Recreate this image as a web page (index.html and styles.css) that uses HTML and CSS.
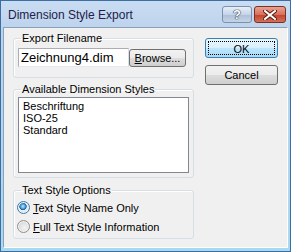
FILE: index.html
```html
<!DOCTYPE html>
<html lang="en">
<head>
    <meta charset="UTF-8">
    <title>Dimension Style Export</title>
    <link rel="stylesheet" href="styles.css">
</head>
<body>
    <div class="window">
        <div class="titlebar">
            <span class="title">Dimension Style Export</span>
            <div class="caption-buttons">
                <span class="cbtn help">?</span>
                <span class="cbtn close">
                    <svg width="14" height="10" viewBox="0 0 14 10">
                        <path d="M2 1 L12 9 M12 1 L2 9" stroke="#5a1a10" stroke-width="4" stroke-linecap="square"/>
                        <path d="M2 1 L12 9 M12 1 L2 9" stroke="#fff" stroke-width="2" stroke-linecap="square"/>
                    </svg>
                </span>
            </div>
        </div>

        <div class="client">
            <div class="left-col">
                <fieldset class="group group-file">
                    <legend>Export Filename</legend>
                    <div class="file-row">
                        <input class="filename" type="text" value="Zeichnung4.dim" aria-label="Export filename">
                        <button class="btn browse"><u>B</u>rowse...</button>
                    </div>
                </fieldset>

                <fieldset class="group group-styles">
                    <legend>Available Dimension Styles</legend>
                    <ul class="listbox">
                        <li>Beschriftung</li>
                        <li>ISO-25</li>
                        <li>Standard</li>
                    </ul>
                </fieldset>

                <fieldset class="group group-text">
                    <legend>Text Style Options</legend>
                    <label class="option">
                        <span class="radio checked"></span>
                        <span><u>T</u>ext Style Name Only</span>
                    </label>
                    <label class="option">
                        <span class="radio"></span>
                        <span><u>F</u>ull Text Style Information</span>
                    </label>
                </fieldset>
            </div>

            <div class="right-col">
                <button class="btn default"><span class="focus">OK</span></button>
                <button class="btn">Cancel</button>
            </div>
        </div>
    </div>
</body>
</html>
```

FILE: styles.css
```css
body {
    margin: 0;
    font-family: "Liberation Sans", Arial, sans-serif;
    font-size: 11px;
    color: #000;
    background: #fff;
}

.window {
    width: 291px;
    height: 252px;
    box-sizing: border-box;
    border: 1px solid #3a6ea5;
    background: linear-gradient(#c9dcf2, #bcd3ec 30px, #a9d9f0);
    display: flex;
    flex-direction: column;
    padding: 0 2px 3px 2px;
}

.titlebar {
    height: 26px;
    display: flex;
    align-items: center;
    justify-content: space-between;
}

.title {
    font-size: 12px;
    color: #22204a;
    padding-left: 5px;
    padding-top: 1px;
}

.caption-buttons {
    display: flex;
    gap: 2px;
    margin-right: 2px;
    margin-top: 1px;
}

.cbtn {
    height: 15px;
    border-radius: 3px;
    display: flex;
    align-items: center;
    justify-content: center;
}

.help {
    width: 28px;
    border: 1px solid #7d91ab;
    background: linear-gradient(#e6eef8, #c5d5e9 50%, #aebfd6 51%, #c4d4e8);
    color: #fff;
    font-weight: bold;
    font-size: 13px;
    text-shadow: 0 0 1px #2b3c55, 0 0 1px #2b3c55, 0 0 1px #2b3c55;
}

.close {
    width: 30px;
    border: 1px solid #7b3026;
    background: linear-gradient(#e8a292, #d8705e 50%, #c5412b 51%, #d3705a);
}

.client {
    flex: 1;
    background: #f0f0f0;
    border: 1px solid #fff;
    border-top-color: #8aa0bb;
    border-left-color: #8aa0bb;
    display: flex;
    padding: 0 11px 0 9px;
    gap: 11px;
}

.left-col {
    width: 181px;
    padding-top: 4px;
}

.group {
    margin: 0;
    border: 1px solid #d5dfe5;
    border-radius: 3px;
    box-shadow: inset 1px 1px 0 #fff;
    padding: 0 4px;
}

.group legend {
    padding: 0 1px;
    margin-left: 3px;
    line-height: 13px;
}

.group-file {
    padding-top: 3px;
    padding-bottom: 10px;
}

.file-row {
    display: flex;
    align-items: flex-start;
}

.filename {
    width: 111px;
    height: 19px;
    box-sizing: border-box;
    border: 1px solid #abadb3;
    border-right-color: #dbdfe6;
    border-bottom-color: #e3e9ef;
    padding: 0 2px;
    font-family: inherit;
    font-size: 13px;
    line-height: 17px;
    margin: 0;
}

.btn {
    font-family: inherit;
    font-size: 11px;
    font-weight: normal;
    color: #000;
    border: 1px solid #707070;
    border-radius: 3px;
    background: linear-gradient(#f2f2f2, #ebebeb 50%, #dddddd 51%, #cfcfcf);
    padding: 0;
    margin: 0;
}

.browse {
    width: 57px;
    height: 18px;
    margin-top: 1px;
    line-height: 14px;
}

.group-styles {
    margin-top: 5px;
    padding-top: 1px;
    padding-bottom: 4px;
}

.listbox {
    list-style: none;
    margin: 0;
    width: 171px;
    height: 76px;
    box-sizing: border-box;
    border: 1px solid #828790;
    background: #fff;
    padding: 2px 4px;
}

.listbox li {
    line-height: 12px;
}

.group-text {
    margin-top: 6px;
    padding-top: 1px;
    padding-bottom: 2px;
}

.option {
    display: flex;
    align-items: center;
    gap: 3px;
    height: 19px;
    margin-left: -1px;
}

.radio {
    width: 13px;
    height: 13px;
    box-sizing: border-box;
    border-radius: 50%;
    border: 1px solid #8e8f8f;
    background: radial-gradient(circle at 60% 60%, #f4f4f4 0, #dcdcdc 60%, #c9c9c9 100%);
    box-shadow: inset 0 0 0 1px #f4f4f4;
}

.radio.checked {
    border-color: #3d7bad;
    background: radial-gradient(circle at 45% 40%, #c1e6fb 0, #4da0de 25%, #1b5f9e 38%, #e7eef6 45%, #c7d7e7 100%);
}

.right-col {
    padding-top: 10px;
    display: flex;
    flex-direction: column;
    gap: 7px;
}

.right-col .btn {
    width: 73px;
    height: 20px;
}

.btn.default {
    border-color: #3c7fb1;
    background: linear-gradient(#eaf6fd, #d9f0fc 50%, #bee6fd 51%, #a7d9f5);
    padding: 2px;
}

.focus {
    display: block;
    height: 100%;
    box-sizing: border-box;
    border: 1px dotted #000;
    line-height: 14px;
}
```
